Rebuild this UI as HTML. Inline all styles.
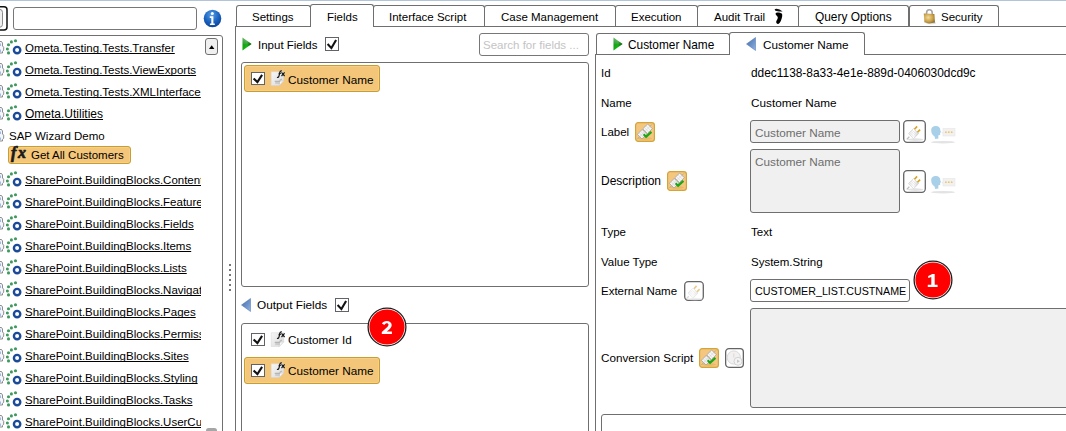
<!DOCTYPE html>
<html><head><meta charset="utf-8">
<style>
html,body{margin:0;padding:0;}
body{width:1066px;height:431px;overflow:hidden;position:relative;background:#fff;font-family:"Liberation Sans",sans-serif;font-size:12px;color:#000;}
.a{position:absolute;box-sizing:border-box;}
.t{position:absolute;white-space:nowrap;line-height:14px;font-size:11.5px;}
.u{text-decoration:underline;text-underline-offset:1px;text-decoration-skip-ink:none;}
.bx{position:absolute;box-sizing:border-box;border:1px solid #6f6f6f;border-radius:3px;}
.tab{position:absolute;box-sizing:border-box;border:1px solid #6f6f6f;border-bottom:none;border-radius:3px 3px 0 0;background:#fff;}
.chk{position:absolute;box-sizing:border-box;width:14px;height:14px;border:1px solid #6a6a6a;background:#fff;}
.orange{position:absolute;box-sizing:border-box;background:#f4c67a;border:1px solid #c89e30;border-radius:3px;box-shadow:inset 0 0 0 1px #f6cf88;}
.btn{position:absolute;box-sizing:border-box;border:1px solid #7a7a7a;border-radius:4px;background:#fff;}
</style></head><body>

<svg width="0" height="0" style="position:absolute">
<defs>
<linearGradient id="docg" x1="0" y1="0" x2="1" y2="1"><stop offset="0" stop-color="#f7f7f7"/><stop offset="1" stop-color="#d9d9d9"/></linearGradient>
<linearGradient id="grt" x1="0" y1="0" x2="1" y2="0"><stop offset="0" stop-color="#0a7a0a"/><stop offset="0.45" stop-color="#1ec81e"/><stop offset="1" stop-color="#0f8f0f"/></linearGradient>
<linearGradient id="blt" x1="0" y1="0" x2="1" y2="0"><stop offset="0" stop-color="#7ea6d8"/><stop offset="0.6" stop-color="#4f7fc0"/><stop offset="1" stop-color="#3a66a8"/></linearGradient>
<linearGradient id="plg" x1="0" y1="0" x2="1" y2="0"><stop offset="0" stop-color="#e8e8e8"/><stop offset="0.5" stop-color="#ffffff"/><stop offset="1" stop-color="#d0d0d0"/></linearGradient>
<radialGradient id="lockg" cx="0.4" cy="0.4" r="0.7"><stop offset="0" stop-color="#f2dc9a"/><stop offset="0.6" stop-color="#c9a048"/><stop offset="1" stop-color="#8a6a28"/></radialGradient>
<linearGradient id="gv" x1="0" y1="0" x2="0" y2="1"><stop offset="0" stop-color="#7cc47c"/><stop offset="0.45" stop-color="#3aae3a"/><stop offset="0.55" stop-color="#17b017"/><stop offset="1" stop-color="#12c012"/></linearGradient>
<linearGradient id="gh" x1="0" y1="0" x2="1" y2="0"><stop offset="0" stop-color="#004000" stop-opacity="0.15"/><stop offset="0.5" stop-color="#004000" stop-opacity="0"/><stop offset="1" stop-color="#003000" stop-opacity="0.75"/></linearGradient>
<linearGradient id="bv" x1="0" y1="0" x2="1" y2="1"><stop offset="0" stop-color="#4a6fa8"/><stop offset="0.6" stop-color="#6e95cc"/><stop offset="1" stop-color="#94b6e8"/></linearGradient>
<linearGradient id="shad" x1="0" y1="0" x2="0" y2="1"><stop offset="0" stop-color="#d8d8d8"/><stop offset="1" stop-color="#ffffff" stop-opacity="0"/></linearGradient>
</defs></svg>
<!-- top line -->
<div class="a" style="left:0;top:0;width:1066px;height:1px;background:#b1c4d8"></div>

<!-- LEFT PANEL -->
<svg class="a" style="left:0;top:0" width="10" height="34" viewBox="0 0 10 34"><rect x="-10" y="6.7" width="17" height="23.4" rx="3" fill="#fff" stroke="#111" stroke-width="1.5"/><rect x="-10" y="9.3" width="12.5" height="18" rx="3" fill="#f0f0f0" stroke="#8c8c8c" stroke-width="1"/></svg>
<div class="bx" style="left:13px;top:7px;width:184px;height:23px;border-color:#777"></div>
<!-- info icon -->
<svg class="a" style="left:203px;top:9px" width="19" height="19" viewBox="0 0 19 19">
<defs><radialGradient id="ig" cx="0.45" cy="0.3" r="0.75"><stop offset="0" stop-color="#5aa0e6"/><stop offset="0.55" stop-color="#1a63c0"/><stop offset="1" stop-color="#0b3f93"/></radialGradient></defs>
<circle cx="9.5" cy="9.5" r="8.8" fill="url(#ig)"/>
<circle cx="9.3" cy="4.6" r="1.5" fill="#fff"/>
<path d="M6.8 7.3h3.6v7.2h1.4v1.6H6.9v-1.6h1.4V8.9H6.8z" fill="#fff"/>
</svg>

<!-- tree panel -->
<div class="a" style="left:-10px;top:35px;width:233px;height:420px;border:1px solid #707070;border-radius:3px;"></div>
<div class="a" style="left:205px;top:38px;width:13px;height:17px;border:1px solid #707070;border-radius:3px;background:#f0f0f0"></div>
<svg class="a" style="left:208px;top:44px" width="8" height="6" viewBox="0 0 8 6"><path d="M1 5H6.4L3.7 1.2Z" fill="#000"/></svg>
<div class="a" style="left:206px;top:428px;width:11px;height:8px;background:#a6a6a6;border-radius:2.5px"></div>

<!--TREE-->
<div class="a" style="left:0;top:36px;width:201px;height:395px;overflow:hidden">
<svg class="a" style="left:0;top:4px" width="6" height="14" viewBox="0 0 6 14"><path d="M-3 1.5h4.5l1 1.5v3l1.2 1.2v3l-1.2 1.2v1.6h-5.5z" fill="#f4f6fa" stroke="#808080" stroke-width="0.9"/><rect x="-2" y="3.5" width="2.8" height="2.5" fill="#86acea"/><rect x="-2" y="9.5" width="2.8" height="2.5" fill="#86acea"/></svg>
<svg class="a" style="left:6px;top:3px" width="18" height="16" viewBox="0 0 18 16"><g fill="#3f9a5f"><circle cx="9.5" cy="1.8" r="1.55"/><circle cx="5.4" cy="2.9" r="1.55"/><circle cx="2.5" cy="5.8" r="1.55"/><circle cx="1.4" cy="10" r="1.55"/><circle cx="2.5" cy="13.9" r="1.55"/></g><ellipse cx="11.1" cy="11.1" rx="3.2" ry="3.2" fill="none" stroke="#1b4a98" stroke-width="2.4"/></svg>
<div class="t u" style="left:25px;top:5px">Ometa.Testing.Tests.Transfer</div>
<svg class="a" style="left:0;top:26px" width="6" height="14" viewBox="0 0 6 14"><path d="M-3 1.5h4.5l1 1.5v3l1.2 1.2v3l-1.2 1.2v1.6h-5.5z" fill="#f4f6fa" stroke="#808080" stroke-width="0.9"/><rect x="-2" y="3.5" width="2.8" height="2.5" fill="#86acea"/><rect x="-2" y="9.5" width="2.8" height="2.5" fill="#86acea"/></svg>
<svg class="a" style="left:6px;top:25px" width="18" height="16" viewBox="0 0 18 16"><g fill="#3f9a5f"><circle cx="9.5" cy="1.8" r="1.55"/><circle cx="5.4" cy="2.9" r="1.55"/><circle cx="2.5" cy="5.8" r="1.55"/><circle cx="1.4" cy="10" r="1.55"/><circle cx="2.5" cy="13.9" r="1.55"/></g><ellipse cx="11.1" cy="11.1" rx="3.2" ry="3.2" fill="none" stroke="#1b4a98" stroke-width="2.4"/></svg>
<div class="t u" style="left:25px;top:27px">Ometa.Testing.Tests.ViewExports</div>
<svg class="a" style="left:0;top:48px" width="6" height="14" viewBox="0 0 6 14"><path d="M-3 1.5h4.5l1 1.5v3l1.2 1.2v3l-1.2 1.2v1.6h-5.5z" fill="#f4f6fa" stroke="#808080" stroke-width="0.9"/><rect x="-2" y="3.5" width="2.8" height="2.5" fill="#86acea"/><rect x="-2" y="9.5" width="2.8" height="2.5" fill="#86acea"/></svg>
<svg class="a" style="left:6px;top:47px" width="18" height="16" viewBox="0 0 18 16"><g fill="#3f9a5f"><circle cx="9.5" cy="1.8" r="1.55"/><circle cx="5.4" cy="2.9" r="1.55"/><circle cx="2.5" cy="5.8" r="1.55"/><circle cx="1.4" cy="10" r="1.55"/><circle cx="2.5" cy="13.9" r="1.55"/></g><ellipse cx="11.1" cy="11.1" rx="3.2" ry="3.2" fill="none" stroke="#1b4a98" stroke-width="2.4"/></svg>
<div class="t u" style="left:25px;top:49px">Ometa.Testing.Tests.XMLInterface</div>
<svg class="a" style="left:0;top:70px" width="6" height="14" viewBox="0 0 6 14"><path d="M-3 1.5h4.5l1 1.5v3l1.2 1.2v3l-1.2 1.2v1.6h-5.5z" fill="#f4f6fa" stroke="#808080" stroke-width="0.9"/><rect x="-2" y="3.5" width="2.8" height="2.5" fill="#86acea"/><rect x="-2" y="9.5" width="2.8" height="2.5" fill="#86acea"/></svg>
<svg class="a" style="left:6px;top:69px" width="18" height="16" viewBox="0 0 18 16"><g fill="#3f9a5f"><circle cx="9.5" cy="1.8" r="1.55"/><circle cx="5.4" cy="2.9" r="1.55"/><circle cx="2.5" cy="5.8" r="1.55"/><circle cx="1.4" cy="10" r="1.55"/><circle cx="2.5" cy="13.9" r="1.55"/></g><ellipse cx="11.1" cy="11.1" rx="3.2" ry="3.2" fill="none" stroke="#1b4a98" stroke-width="2.4"/></svg>
<div class="t u" style="left:25px;top:71px;font-size:12px">Ometa.Utilities</div>
<svg class="a" style="left:0;top:92px" width="6" height="14" viewBox="0 0 6 14"><path d="M-3 1.5h4.5l1 1.5v3l1.2 1.2v3l-1.2 1.2v1.6h-5.5z" fill="#f4f6fa" stroke="#808080" stroke-width="0.9"/><rect x="-2" y="3.5" width="2.8" height="2.5" fill="#86acea"/><rect x="-2" y="9.5" width="2.8" height="2.5" fill="#86acea"/></svg>
<div class="t" style="left:9px;top:93px">SAP Wizard Demo</div>
<div class="orange" style="left:8px;top:110px;width:123px;height:18px"></div>
<div class="a" style="left:11px;top:108px;font-family:'Liberation Serif';font-style:italic;font-weight:bold;font-size:16px;line-height:18px;color:#1a1a1a;letter-spacing:1.6px;-webkit-text-stroke:0.7px #1a1a1a">fx</div>
<div class="t" style="left:31px;top:112px">Get All Customers</div>
<svg class="a" style="left:0;top:136px" width="6" height="14" viewBox="0 0 6 14"><path d="M-3 1.5h4.5l1 1.5v3l1.2 1.2v3l-1.2 1.2v1.6h-5.5z" fill="#f4f6fa" stroke="#808080" stroke-width="0.9"/><rect x="-2" y="3.5" width="2.8" height="2.5" fill="#86acea"/><rect x="-2" y="9.5" width="2.8" height="2.5" fill="#86acea"/></svg>
<svg class="a" style="left:6px;top:135px" width="18" height="16" viewBox="0 0 18 16"><g fill="#3f9a5f"><circle cx="9.5" cy="1.8" r="1.55"/><circle cx="5.4" cy="2.9" r="1.55"/><circle cx="2.5" cy="5.8" r="1.55"/><circle cx="1.4" cy="10" r="1.55"/><circle cx="2.5" cy="13.9" r="1.55"/></g><ellipse cx="11.1" cy="11.1" rx="3.2" ry="3.2" fill="none" stroke="#1b4a98" stroke-width="2.4"/></svg>
<div class="t u" style="left:25px;top:137px">SharePoint.BuildingBlocks.Content</div>
<svg class="a" style="left:0;top:158px" width="6" height="14" viewBox="0 0 6 14"><path d="M-3 1.5h4.5l1 1.5v3l1.2 1.2v3l-1.2 1.2v1.6h-5.5z" fill="#f4f6fa" stroke="#808080" stroke-width="0.9"/><rect x="-2" y="3.5" width="2.8" height="2.5" fill="#86acea"/><rect x="-2" y="9.5" width="2.8" height="2.5" fill="#86acea"/></svg>
<svg class="a" style="left:6px;top:157px" width="18" height="16" viewBox="0 0 18 16"><g fill="#3f9a5f"><circle cx="9.5" cy="1.8" r="1.55"/><circle cx="5.4" cy="2.9" r="1.55"/><circle cx="2.5" cy="5.8" r="1.55"/><circle cx="1.4" cy="10" r="1.55"/><circle cx="2.5" cy="13.9" r="1.55"/></g><ellipse cx="11.1" cy="11.1" rx="3.2" ry="3.2" fill="none" stroke="#1b4a98" stroke-width="2.4"/></svg>
<div class="t u" style="left:25px;top:159px">SharePoint.BuildingBlocks.Features</div>
<svg class="a" style="left:0;top:180px" width="6" height="14" viewBox="0 0 6 14"><path d="M-3 1.5h4.5l1 1.5v3l1.2 1.2v3l-1.2 1.2v1.6h-5.5z" fill="#f4f6fa" stroke="#808080" stroke-width="0.9"/><rect x="-2" y="3.5" width="2.8" height="2.5" fill="#86acea"/><rect x="-2" y="9.5" width="2.8" height="2.5" fill="#86acea"/></svg>
<svg class="a" style="left:6px;top:179px" width="18" height="16" viewBox="0 0 18 16"><g fill="#3f9a5f"><circle cx="9.5" cy="1.8" r="1.55"/><circle cx="5.4" cy="2.9" r="1.55"/><circle cx="2.5" cy="5.8" r="1.55"/><circle cx="1.4" cy="10" r="1.55"/><circle cx="2.5" cy="13.9" r="1.55"/></g><ellipse cx="11.1" cy="11.1" rx="3.2" ry="3.2" fill="none" stroke="#1b4a98" stroke-width="2.4"/></svg>
<div class="t u" style="left:25px;top:181px">SharePoint.BuildingBlocks.Fields</div>
<svg class="a" style="left:0;top:202px" width="6" height="14" viewBox="0 0 6 14"><path d="M-3 1.5h4.5l1 1.5v3l1.2 1.2v3l-1.2 1.2v1.6h-5.5z" fill="#f4f6fa" stroke="#808080" stroke-width="0.9"/><rect x="-2" y="3.5" width="2.8" height="2.5" fill="#86acea"/><rect x="-2" y="9.5" width="2.8" height="2.5" fill="#86acea"/></svg>
<svg class="a" style="left:6px;top:201px" width="18" height="16" viewBox="0 0 18 16"><g fill="#3f9a5f"><circle cx="9.5" cy="1.8" r="1.55"/><circle cx="5.4" cy="2.9" r="1.55"/><circle cx="2.5" cy="5.8" r="1.55"/><circle cx="1.4" cy="10" r="1.55"/><circle cx="2.5" cy="13.9" r="1.55"/></g><ellipse cx="11.1" cy="11.1" rx="3.2" ry="3.2" fill="none" stroke="#1b4a98" stroke-width="2.4"/></svg>
<div class="t u" style="left:25px;top:203px">SharePoint.BuildingBlocks.Items</div>
<svg class="a" style="left:0;top:224px" width="6" height="14" viewBox="0 0 6 14"><path d="M-3 1.5h4.5l1 1.5v3l1.2 1.2v3l-1.2 1.2v1.6h-5.5z" fill="#f4f6fa" stroke="#808080" stroke-width="0.9"/><rect x="-2" y="3.5" width="2.8" height="2.5" fill="#86acea"/><rect x="-2" y="9.5" width="2.8" height="2.5" fill="#86acea"/></svg>
<svg class="a" style="left:6px;top:223px" width="18" height="16" viewBox="0 0 18 16"><g fill="#3f9a5f"><circle cx="9.5" cy="1.8" r="1.55"/><circle cx="5.4" cy="2.9" r="1.55"/><circle cx="2.5" cy="5.8" r="1.55"/><circle cx="1.4" cy="10" r="1.55"/><circle cx="2.5" cy="13.9" r="1.55"/></g><ellipse cx="11.1" cy="11.1" rx="3.2" ry="3.2" fill="none" stroke="#1b4a98" stroke-width="2.4"/></svg>
<div class="t u" style="left:25px;top:225px">SharePoint.BuildingBlocks.Lists</div>
<svg class="a" style="left:0;top:246px" width="6" height="14" viewBox="0 0 6 14"><path d="M-3 1.5h4.5l1 1.5v3l1.2 1.2v3l-1.2 1.2v1.6h-5.5z" fill="#f4f6fa" stroke="#808080" stroke-width="0.9"/><rect x="-2" y="3.5" width="2.8" height="2.5" fill="#86acea"/><rect x="-2" y="9.5" width="2.8" height="2.5" fill="#86acea"/></svg>
<svg class="a" style="left:6px;top:245px" width="18" height="16" viewBox="0 0 18 16"><g fill="#3f9a5f"><circle cx="9.5" cy="1.8" r="1.55"/><circle cx="5.4" cy="2.9" r="1.55"/><circle cx="2.5" cy="5.8" r="1.55"/><circle cx="1.4" cy="10" r="1.55"/><circle cx="2.5" cy="13.9" r="1.55"/></g><ellipse cx="11.1" cy="11.1" rx="3.2" ry="3.2" fill="none" stroke="#1b4a98" stroke-width="2.4"/></svg>
<div class="t u" style="left:25px;top:247px">SharePoint.BuildingBlocks.Navigation</div>
<svg class="a" style="left:0;top:268px" width="6" height="14" viewBox="0 0 6 14"><path d="M-3 1.5h4.5l1 1.5v3l1.2 1.2v3l-1.2 1.2v1.6h-5.5z" fill="#f4f6fa" stroke="#808080" stroke-width="0.9"/><rect x="-2" y="3.5" width="2.8" height="2.5" fill="#86acea"/><rect x="-2" y="9.5" width="2.8" height="2.5" fill="#86acea"/></svg>
<svg class="a" style="left:6px;top:267px" width="18" height="16" viewBox="0 0 18 16"><g fill="#3f9a5f"><circle cx="9.5" cy="1.8" r="1.55"/><circle cx="5.4" cy="2.9" r="1.55"/><circle cx="2.5" cy="5.8" r="1.55"/><circle cx="1.4" cy="10" r="1.55"/><circle cx="2.5" cy="13.9" r="1.55"/></g><ellipse cx="11.1" cy="11.1" rx="3.2" ry="3.2" fill="none" stroke="#1b4a98" stroke-width="2.4"/></svg>
<div class="t u" style="left:25px;top:269px">SharePoint.BuildingBlocks.Pages</div>
<svg class="a" style="left:0;top:290px" width="6" height="14" viewBox="0 0 6 14"><path d="M-3 1.5h4.5l1 1.5v3l1.2 1.2v3l-1.2 1.2v1.6h-5.5z" fill="#f4f6fa" stroke="#808080" stroke-width="0.9"/><rect x="-2" y="3.5" width="2.8" height="2.5" fill="#86acea"/><rect x="-2" y="9.5" width="2.8" height="2.5" fill="#86acea"/></svg>
<svg class="a" style="left:6px;top:289px" width="18" height="16" viewBox="0 0 18 16"><g fill="#3f9a5f"><circle cx="9.5" cy="1.8" r="1.55"/><circle cx="5.4" cy="2.9" r="1.55"/><circle cx="2.5" cy="5.8" r="1.55"/><circle cx="1.4" cy="10" r="1.55"/><circle cx="2.5" cy="13.9" r="1.55"/></g><ellipse cx="11.1" cy="11.1" rx="3.2" ry="3.2" fill="none" stroke="#1b4a98" stroke-width="2.4"/></svg>
<div class="t u" style="left:25px;top:291px">SharePoint.BuildingBlocks.Permissions</div>
<svg class="a" style="left:0;top:312px" width="6" height="14" viewBox="0 0 6 14"><path d="M-3 1.5h4.5l1 1.5v3l1.2 1.2v3l-1.2 1.2v1.6h-5.5z" fill="#f4f6fa" stroke="#808080" stroke-width="0.9"/><rect x="-2" y="3.5" width="2.8" height="2.5" fill="#86acea"/><rect x="-2" y="9.5" width="2.8" height="2.5" fill="#86acea"/></svg>
<svg class="a" style="left:6px;top:311px" width="18" height="16" viewBox="0 0 18 16"><g fill="#3f9a5f"><circle cx="9.5" cy="1.8" r="1.55"/><circle cx="5.4" cy="2.9" r="1.55"/><circle cx="2.5" cy="5.8" r="1.55"/><circle cx="1.4" cy="10" r="1.55"/><circle cx="2.5" cy="13.9" r="1.55"/></g><ellipse cx="11.1" cy="11.1" rx="3.2" ry="3.2" fill="none" stroke="#1b4a98" stroke-width="2.4"/></svg>
<div class="t u" style="left:25px;top:313px">SharePoint.BuildingBlocks.Sites</div>
<svg class="a" style="left:0;top:334px" width="6" height="14" viewBox="0 0 6 14"><path d="M-3 1.5h4.5l1 1.5v3l1.2 1.2v3l-1.2 1.2v1.6h-5.5z" fill="#f4f6fa" stroke="#808080" stroke-width="0.9"/><rect x="-2" y="3.5" width="2.8" height="2.5" fill="#86acea"/><rect x="-2" y="9.5" width="2.8" height="2.5" fill="#86acea"/></svg>
<svg class="a" style="left:6px;top:333px" width="18" height="16" viewBox="0 0 18 16"><g fill="#3f9a5f"><circle cx="9.5" cy="1.8" r="1.55"/><circle cx="5.4" cy="2.9" r="1.55"/><circle cx="2.5" cy="5.8" r="1.55"/><circle cx="1.4" cy="10" r="1.55"/><circle cx="2.5" cy="13.9" r="1.55"/></g><ellipse cx="11.1" cy="11.1" rx="3.2" ry="3.2" fill="none" stroke="#1b4a98" stroke-width="2.4"/></svg>
<div class="t u" style="left:25px;top:335px">SharePoint.BuildingBlocks.Styling</div>
<svg class="a" style="left:0;top:356px" width="6" height="14" viewBox="0 0 6 14"><path d="M-3 1.5h4.5l1 1.5v3l1.2 1.2v3l-1.2 1.2v1.6h-5.5z" fill="#f4f6fa" stroke="#808080" stroke-width="0.9"/><rect x="-2" y="3.5" width="2.8" height="2.5" fill="#86acea"/><rect x="-2" y="9.5" width="2.8" height="2.5" fill="#86acea"/></svg>
<svg class="a" style="left:6px;top:355px" width="18" height="16" viewBox="0 0 18 16"><g fill="#3f9a5f"><circle cx="9.5" cy="1.8" r="1.55"/><circle cx="5.4" cy="2.9" r="1.55"/><circle cx="2.5" cy="5.8" r="1.55"/><circle cx="1.4" cy="10" r="1.55"/><circle cx="2.5" cy="13.9" r="1.55"/></g><ellipse cx="11.1" cy="11.1" rx="3.2" ry="3.2" fill="none" stroke="#1b4a98" stroke-width="2.4"/></svg>
<div class="t u" style="left:25px;top:357px">SharePoint.BuildingBlocks.Tasks</div>
<svg class="a" style="left:0;top:378px" width="6" height="14" viewBox="0 0 6 14"><path d="M-3 1.5h4.5l1 1.5v3l1.2 1.2v3l-1.2 1.2v1.6h-5.5z" fill="#f4f6fa" stroke="#808080" stroke-width="0.9"/><rect x="-2" y="3.5" width="2.8" height="2.5" fill="#86acea"/><rect x="-2" y="9.5" width="2.8" height="2.5" fill="#86acea"/></svg>
<svg class="a" style="left:6px;top:377px" width="18" height="16" viewBox="0 0 18 16"><g fill="#3f9a5f"><circle cx="9.5" cy="1.8" r="1.55"/><circle cx="5.4" cy="2.9" r="1.55"/><circle cx="2.5" cy="5.8" r="1.55"/><circle cx="1.4" cy="10" r="1.55"/><circle cx="2.5" cy="13.9" r="1.55"/></g><ellipse cx="11.1" cy="11.1" rx="3.2" ry="3.2" fill="none" stroke="#1b4a98" stroke-width="2.4"/></svg>
<div class="t u" style="left:25px;top:379px">SharePoint.BuildingBlocks.UserCustomActions</div>
</div>
<!--/TREE-->

<!-- splitter dots -->
<div class="a" style="left:229px;top:264px;width:2px;height:27px;background:repeating-linear-gradient(to bottom,#777 0,#777 2px,transparent 2px,transparent 5px)"></div>

<!-- TAB STRIP -->
<div class="a" style="left:236px;top:26px;width:830px;height:1px;background:#6f6f6f"></div>
<div class="a" style="left:235px;top:26px;width:1px;height:405px;background:#6f6f6f"></div>
<div class="tab" style="left:236px;top:5px;width:75px;height:21px"></div>
<div class="tab" style="left:373px;top:5px;width:112px;height:21px"></div>
<div class="tab" style="left:484px;top:5px;width:132px;height:21px"></div>
<div class="tab" style="left:615px;top:5px;width:83px;height:21px"></div>
<div class="tab" style="left:697px;top:5px;width:102px;height:21px"></div>
<div class="tab" style="left:798px;top:5px;width:111px;height:21px"></div>
<div class="tab" style="left:909px;top:5px;width:90px;height:21px"></div>
<div class="tab" style="left:310px;top:4px;width:64px;height:23px"></div>

<div class="t" style="left:252px;top:10px">Settings</div>
<div class="t" style="left:327px;top:10px">Fields</div>
<div class="t" style="left:389px;top:10px">Interface Script</div>
<div class="t" style="left:501px;top:10px">Case Management</div>
<div class="t" style="left:631px;top:10px">Execution</div>
<div class="t" style="left:714px;top:10px">Audit Trail</div>
<svg class="a" style="left:774px;top:8px" width="10" height="17" viewBox="0 0 10 17"><path d="M0.6 1.4C1.2 0.2 3.6 0.6 5.6 1.5L8.6 3.4C6.2 3.9 3.2 3.4 1.4 2.8Z" fill="#111"/><path d="M1.6 5.5C2 4 6 4.2 7.8 5.6C8.8 6.8 8 10 7 12.5C6 15 5 16 3.8 15.9C2.3 15.7 1.8 14.2 2.5 12.8C3.3 11.3 4.2 10 3.6 8.8C3 7.8 1.4 7 1.6 5.5Z" fill="#000"/></svg>
<div class="t" style="left:815px;top:10px;font-size:11.9px">Query Options</div>
<svg class="a" style="left:922px;top:8px" width="16" height="17" viewBox="0 0 16 17"><path d="M4.6 7.5V4.8C4.6 0.8 10.2 0.8 10.2 4.8V7.5" fill="none" stroke="#a4a4a4" stroke-width="1.6"/><ellipse cx="9" cy="15" rx="5" ry="1.2" fill="#dcdcdc"/><path d="M1.8 5.6L12.4 6.1L13 14.6L7 15.4L2.4 14.2Z" fill="url(#lockg)"/></svg>
<div class="t" style="left:941px;top:10px">Security</div>

<!-- INPUT FIELDS -->
<svg class="a" style="left:242px;top:37px" width="10" height="14" viewBox="0 0 10 14"><path d="M0.5 0.5L9.5 7L0.5 13.5z" fill="url(#gv)"/><path d="M0.5 0.5L9.5 7L0.5 13.5z" fill="url(#gh)"/></svg>
<div class="t" style="left:258px;top:38px">Input Fields</div>
<svg class="a" style="left:325px;top:37px" width="14" height="14" viewBox="0 0 14 14"><rect x="0.5" y="0.5" width="13" height="13" fill="#fff" stroke="#606468"/><path d="M2.6 7.0L6.4 11.1L11.1 2.9" fill="none" stroke="#121212" stroke-width="2.1"/></svg>
<div class="bx" style="left:479px;top:33px;width:110px;height:23px;border-color:#777"></div>
<div class="t" style="left:483px;top:38px;color:#c4c4c4">Search for fields ...</div>

<div class="bx" style="left:241px;top:62px;width:348px;height:225px"></div>
<div class="orange" style="left:244px;top:65px;width:136px;height:27px"></div>
<svg class="a" style="left:251px;top:72px" width="14" height="13" viewBox="0 0 14 13"><rect x="0.5" y="0.5" width="13" height="12" fill="#fff" stroke="#606468"/><path d="M2.6 6.5L6.4 10.1L11.1 2.9" fill="none" stroke="#121212" stroke-width="2.1"/></svg>
<svg class="a" style="left:270px;top:70px" width="16" height="16" viewBox="0 0 16 16"><path d="M1.2 1.8H13.7V10.8L9.1 15.6H1.2Z" fill="url(#docg)" stroke="#d6d6d6" stroke-width="0.5"/><path d="M9.1 15.6L13.7 10.8L9.8 11.4Z" fill="#fbfbfb" stroke="#c9c9c9" stroke-width="0.5"/><path d="M7 7.3Q8.5 7.9 9 5.9L9.8 2.3Q10.2 0.6 11.8 0.9" fill="none" stroke="#141414" stroke-width="1.25"/><path d="M8.6 3.4H11" stroke="#141414" stroke-width="0.9"/><path d="M11.5 2.4L14.6 6M14.6 2.4L11.5 6" stroke="#1a1a1a" stroke-width="1.15"/><path d="M4.8 11.4h5.2M5.2 13h4.6M9.6 10.4l2.2-1.3" stroke="#b4b4b4" stroke-width="1.2"/></svg>
<div class="t" style="left:288px;top:73px;font-size:11.75px">Customer Name</div>

<!-- splitter between lists: output -->
<svg class="a" style="left:241px;top:297.5px" width="10" height="14" viewBox="0 0 10 14"><path d="M9.5 0.5L0.5 7L9.5 13.5z" fill="url(#bv)" stroke="#4a70a8" stroke-width="0.5"/></svg>
<div class="t" style="left:257px;top:298px;font-size:11.8px">Output Fields</div>
<svg class="a" style="left:335px;top:298px" width="14" height="14" viewBox="0 0 14 14"><rect x="0.5" y="0.5" width="13" height="13" fill="#fff" stroke="#606468"/><path d="M2.6 7.0L6.4 11.1L11.1 2.9" fill="none" stroke="#121212" stroke-width="2.1"/></svg>

<div class="bx" style="left:241px;top:323px;width:348px;height:140px"></div>
<svg class="a" style="left:251px;top:333px" width="14" height="13" viewBox="0 0 14 13"><rect x="0.5" y="0.5" width="13" height="12" fill="#fff" stroke="#606468"/><path d="M2.6 6.5L6.4 10.1L11.1 2.9" fill="none" stroke="#121212" stroke-width="2.1"/></svg>
<svg class="a" style="left:270px;top:331px" width="16" height="16" viewBox="0 0 16 16"><path d="M1.2 1.8H13.7V10.8L9.1 15.6H1.2Z" fill="url(#docg)" stroke="#d6d6d6" stroke-width="0.5"/><path d="M9.1 15.6L13.7 10.8L9.8 11.4Z" fill="#fbfbfb" stroke="#c9c9c9" stroke-width="0.5"/><path d="M7 7.3Q8.5 7.9 9 5.9L9.8 2.3Q10.2 0.6 11.8 0.9" fill="none" stroke="#141414" stroke-width="1.25"/><path d="M8.6 3.4H11" stroke="#141414" stroke-width="0.9"/><path d="M11.5 2.4L14.6 6M14.6 2.4L11.5 6" stroke="#1a1a1a" stroke-width="1.15"/><path d="M4.8 11.4h5.2M5.2 13h4.6M9.6 10.4l2.2-1.3" stroke="#b4b4b4" stroke-width="1.2"/></svg>
<div class="t" style="left:288px;top:333px;font-size:11.7px">Customer Id</div>
<div class="orange" style="left:244px;top:357px;width:136px;height:27px"></div>
<svg class="a" style="left:251px;top:364px" width="14" height="13" viewBox="0 0 14 13"><rect x="0.5" y="0.5" width="13" height="12" fill="#fff" stroke="#606468"/><path d="M2.6 6.5L6.4 10.1L11.1 2.9" fill="none" stroke="#121212" stroke-width="2.1"/></svg>
<svg class="a" style="left:270px;top:362px" width="16" height="16" viewBox="0 0 16 16"><path d="M1.2 1.8H13.7V10.8L9.1 15.6H1.2Z" fill="url(#docg)" stroke="#d6d6d6" stroke-width="0.5"/><path d="M9.1 15.6L13.7 10.8L9.8 11.4Z" fill="#fbfbfb" stroke="#c9c9c9" stroke-width="0.5"/><path d="M7 7.3Q8.5 7.9 9 5.9L9.8 2.3Q10.2 0.6 11.8 0.9" fill="none" stroke="#141414" stroke-width="1.25"/><path d="M8.6 3.4H11" stroke="#141414" stroke-width="0.9"/><path d="M11.5 2.4L14.6 6M14.6 2.4L11.5 6" stroke="#1a1a1a" stroke-width="1.15"/><path d="M4.8 11.4h5.2M5.2 13h4.6M9.6 10.4l2.2-1.3" stroke="#b4b4b4" stroke-width="1.2"/></svg>
<div class="t" style="left:288px;top:364px;font-size:11.75px">Customer Name</div>

<!-- RIGHT PANEL: inner tabs -->
<div class="a" style="left:596px;top:54px;width:470px;height:1px;background:#6f6f6f"></div>
<div class="a" style="left:595px;top:54px;width:1px;height:377px;background:#6f6f6f"></div>
<div class="tab" style="left:596px;top:33px;width:134px;height:21px"></div>
<div class="tab" style="left:729px;top:32px;width:136px;height:23px"></div>
<svg class="a" style="left:613px;top:37px" width="10" height="14" viewBox="0 0 10 14"><path d="M0.5 0.5L9.5 7L0.5 13.5z" fill="url(#gv)"/><path d="M0.5 0.5L9.5 7L0.5 13.5z" fill="url(#gh)"/></svg>
<div class="t" style="left:628px;top:38px;font-size:11.85px">Customer Name</div>
<svg class="a" style="left:746px;top:37px" width="10" height="14" viewBox="0 0 10 14"><path d="M9.5 0.5L0.5 7L9.5 13.5z" fill="url(#bv)" stroke="#4a70a8" stroke-width="0.5"/></svg>
<div class="t" style="left:763px;top:38px;font-size:11.75px">Customer Name</div>

<!-- rows -->
<div class="t" style="left:601px;top:66px">Id</div>
<div class="t" style="left:751px;top:66px;font-size:11.9px">ddec1138-8a33-4e1e-889d-0406030dcd9c</div>
<div class="t" style="left:601px;top:96px">Name</div>
<div class="t" style="left:751px;top:96px;font-size:11.75px">Customer Name</div>
<div class="t" style="left:601px;top:125px">Label</div>
<svg class="a" style="left:635px;top:122px" width="20" height="20" viewBox="0 0 20 20"><rect x="0.6" y="0.6" width="18.8" height="18.8" rx="2.6" fill="#f5c77e" stroke="#d3a43a" stroke-width="1.2"/><ellipse cx="10" cy="16.5" rx="7" ry="1.5" fill="#e9b96a"/><g transform="rotate(45 9.8 9.5)"><rect x="6.5" y="2.2" width="6.6" height="6.9" fill="#f6f6f6" stroke="#9c9c9c" stroke-width="0.7"/><rect x="6.5" y="9.9" width="6.6" height="6.9" fill="#f2f2f2" stroke="#9c9c9c" stroke-width="0.7"/><path d="M6.5 4.6h6.6M6.5 7h6.6M6.5 12.2h6.6M6.5 14.5h6.6M9.8 2.2v14.6" stroke="#cfcfcf" stroke-width="0.5"/><path d="M9.8 -0.5v2.7M9.8 16.8v3.2" stroke="#a8a8a8" stroke-width="0.8"/></g><path d="M8.6 12.3L11.1 14.8L16.4 9.9" fill="none" stroke="#1aa81a" stroke-width="2.2"/></svg>
<div class="bx" style="left:750px;top:120px;width:150px;height:23px;background:#f0f0f0"></div>
<div class="t" style="left:755px;top:126px;color:#6d6d6d;font-size:11.75px">Customer Name</div>
<svg class="a" style="left:903px;top:120px" width="23" height="23" viewBox="0 0 23 23"><rect x="0.7" y="0.7" width="21.6" height="21.6" rx="3.5" fill="#fff" stroke="#646464" stroke-width="1.3"/><g opacity="1" transform="translate(0.0 0.0)"><ellipse cx="12.5" cy="19.6" rx="8" ry="1.3" fill="#e2e2e2"/><path d="M11.3 9.5L14.1 6.4M13.9 12.8L17.1 9.7" stroke="#dba528" stroke-width="1.7"/><path d="M10.6 8.6L15.6 13.6L10.5 18.6L5.5 13.6Z" fill="url(#plg)" stroke="#c8c8c8" stroke-width="0.6"/><path d="M8 11.2l5 5M9.2 10.2l5 5M6.8 12.4l5 5" stroke="#d6d6d6" stroke-width="0.5"/><path d="M6.3 16.8L3.8 19.4" stroke="#bdbdbd" stroke-width="1.3"/></g></svg><svg class="a" style="left:930px;top:125px" width="26" height="20" viewBox="0 0 26 20"><ellipse cx="13" cy="17.2" rx="12" ry="1.3" fill="#e3e3e3"/><path d="M1.2 5.3C1.2 2.3 3.5 1 6 1C8.7 1 10.4 2.8 10.3 5.3L11.1 7.3L10.1 7.8L10.2 9.8L8.3 10.4L8.4 13.6L5.2 14L4.6 11.4C2.3 10.3 1.2 8.2 1.2 5.3Z" fill="#a8d0e8"/><path d="M11.2 7.6L13.3 6.5V9Z" fill="#ececec"/><rect x="13" y="3.4" width="12" height="7.6" fill="#f1f1f1" stroke="#e6e6e6" stroke-width="0.6"/><circle cx="15.9" cy="7.2" r="0.9" fill="#f0c46a"/><circle cx="18.8" cy="7.2" r="0.9" fill="#f0c46a"/><circle cx="21.7" cy="7.2" r="0.9" fill="#f0c46a"/></svg>

<div class="t" style="left:601px;top:174px;font-size:12px">Description</div>
<svg class="a" style="left:667px;top:171px" width="20" height="20" viewBox="0 0 20 20"><rect x="0.6" y="0.6" width="18.8" height="18.8" rx="2.6" fill="#f5c77e" stroke="#d3a43a" stroke-width="1.2"/><ellipse cx="10" cy="16.5" rx="7" ry="1.5" fill="#e9b96a"/><g transform="rotate(45 9.8 9.5)"><rect x="6.5" y="2.2" width="6.6" height="6.9" fill="#f6f6f6" stroke="#9c9c9c" stroke-width="0.7"/><rect x="6.5" y="9.9" width="6.6" height="6.9" fill="#f2f2f2" stroke="#9c9c9c" stroke-width="0.7"/><path d="M6.5 4.6h6.6M6.5 7h6.6M6.5 12.2h6.6M6.5 14.5h6.6M9.8 2.2v14.6" stroke="#cfcfcf" stroke-width="0.5"/><path d="M9.8 -0.5v2.7M9.8 16.8v3.2" stroke="#a8a8a8" stroke-width="0.8"/></g><path d="M8.6 12.3L11.1 14.8L16.4 9.9" fill="none" stroke="#1aa81a" stroke-width="2.2"/></svg>
<div class="bx" style="left:750px;top:149px;width:150px;height:64px;background:#f0f0f0"></div>
<div class="t" style="left:755px;top:155px;color:#6d6d6d;font-size:11.75px">Customer Name</div>
<svg class="a" style="left:903px;top:170px" width="23" height="23" viewBox="0 0 23 23"><rect x="0.7" y="0.7" width="21.6" height="21.6" rx="3.5" fill="#fff" stroke="#646464" stroke-width="1.3"/><g opacity="1" transform="translate(0.0 0.0)"><ellipse cx="12.5" cy="19.6" rx="8" ry="1.3" fill="#e2e2e2"/><path d="M11.3 9.5L14.1 6.4M13.9 12.8L17.1 9.7" stroke="#dba528" stroke-width="1.7"/><path d="M10.6 8.6L15.6 13.6L10.5 18.6L5.5 13.6Z" fill="url(#plg)" stroke="#c8c8c8" stroke-width="0.6"/><path d="M8 11.2l5 5M9.2 10.2l5 5M6.8 12.4l5 5" stroke="#d6d6d6" stroke-width="0.5"/><path d="M6.3 16.8L3.8 19.4" stroke="#bdbdbd" stroke-width="1.3"/></g></svg><svg class="a" style="left:930px;top:175px" width="26" height="20" viewBox="0 0 26 20"><ellipse cx="13" cy="17.2" rx="12" ry="1.3" fill="#e3e3e3"/><path d="M1.2 5.3C1.2 2.3 3.5 1 6 1C8.7 1 10.4 2.8 10.3 5.3L11.1 7.3L10.1 7.8L10.2 9.8L8.3 10.4L8.4 13.6L5.2 14L4.6 11.4C2.3 10.3 1.2 8.2 1.2 5.3Z" fill="#a8d0e8"/><path d="M11.2 7.6L13.3 6.5V9Z" fill="#ececec"/><rect x="13" y="3.4" width="12" height="7.6" fill="#f1f1f1" stroke="#e6e6e6" stroke-width="0.6"/><circle cx="15.9" cy="7.2" r="0.9" fill="#f0c46a"/><circle cx="18.8" cy="7.2" r="0.9" fill="#f0c46a"/><circle cx="21.7" cy="7.2" r="0.9" fill="#f0c46a"/></svg>

<div class="t" style="left:601px;top:225px">Type</div>
<div class="t" style="left:751px;top:225px">Text</div>
<div class="t" style="left:601px;top:255px">Value Type</div>
<div class="t" style="left:751px;top:255px">System.String</div>
<div class="t" style="left:601px;top:284px">External Name</div>
<svg class="a" style="left:684px;top:281px" width="20" height="20" viewBox="0 0 20 20"><rect x="0.7" y="0.7" width="18.6" height="18.6" rx="3.5" fill="#fff" stroke="#646464" stroke-width="1.3"/><g opacity="0.55" transform="translate(-1.5 -1.5)"><ellipse cx="12.5" cy="19.6" rx="8" ry="1.3" fill="#e2e2e2"/><path d="M11.3 9.5L14.1 6.4M13.9 12.8L17.1 9.7" stroke="#dba528" stroke-width="1.7"/><path d="M10.6 8.6L15.6 13.6L10.5 18.6L5.5 13.6Z" fill="url(#plg)" stroke="#c8c8c8" stroke-width="0.6"/><path d="M8 11.2l5 5M9.2 10.2l5 5M6.8 12.4l5 5" stroke="#d6d6d6" stroke-width="0.5"/><path d="M6.3 16.8L3.8 19.4" stroke="#bdbdbd" stroke-width="1.3"/></g></svg>
<div class="bx" style="left:750px;top:279px;width:160px;height:23px;background:#fff"></div>
<div class="t" style="left:755px;top:284px;font-size:10.7px">CUSTOMER_LIST.CUSTNAME</div>

<div class="t" style="left:601px;top:351px;font-size:11.7px">Conversion Script</div>
<svg class="a" style="left:699px;top:348px" width="20" height="20" viewBox="0 0 20 20"><rect x="0.6" y="0.6" width="18.8" height="18.8" rx="2.6" fill="#f5c77e" stroke="#d3a43a" stroke-width="1.2"/><ellipse cx="10" cy="16.5" rx="7" ry="1.5" fill="#e9b96a"/><g transform="rotate(45 9.8 9.5)"><rect x="6.5" y="2.2" width="6.6" height="6.9" fill="#f6f6f6" stroke="#9c9c9c" stroke-width="0.7"/><rect x="6.5" y="9.9" width="6.6" height="6.9" fill="#f2f2f2" stroke="#9c9c9c" stroke-width="0.7"/><path d="M6.5 4.6h6.6M6.5 7h6.6M6.5 12.2h6.6M6.5 14.5h6.6M9.8 2.2v14.6" stroke="#cfcfcf" stroke-width="0.5"/><path d="M9.8 -0.5v2.7M9.8 16.8v3.2" stroke="#a8a8a8" stroke-width="0.8"/></g><path d="M8.6 12.3L11.1 14.8L16.4 9.9" fill="none" stroke="#1aa81a" stroke-width="2.2"/></svg>
<svg class="a" style="left:725px;top:348px" width="19" height="20" viewBox="0 0 19 20"><rect x="0.65" y="0.65" width="17.7" height="18.7" rx="3.3" fill="#fff" stroke="#646464" stroke-width="1.3"/><circle cx="8.8" cy="9.5" r="6.6" fill="#f1f1f1" stroke="#d9d9d9" stroke-width="1"/><path d="M8.8 5.5V9.5" stroke="#e6b8b8" stroke-width="0.6"/><circle cx="13" cy="13.3" r="4" fill="#f4f4f4" stroke="#cfcfcf" stroke-width="0.9"/><path d="M12 11.5L15 13.3L12 15.1Z" fill="#c8c8c8"/></svg>
<div class="bx" style="left:750px;top:308px;width:330px;height:100px;background:#f0f0f0"></div>
<div class="bx" style="left:601px;top:414px;width:480px;height:40px;background:#fff"></div>

<!-- badges -->
<svg class="a" style="left:913px;top:260px" width="40" height="40" viewBox="0 0 40 40"><circle cx="20" cy="20" r="18.9" fill="#fff" stroke="#1e1e1e" stroke-width="1.3"/><circle cx="20" cy="20" r="17.6" fill="#f00"/><path d="M15.2 15.9L19.4 14H21.7V24.7H24.6V27H14.8V24.7H18.3V16.9L15.2 18Z" fill="#fff"/></svg>
<svg class="a" style="left:367px;top:307px" width="40" height="40" viewBox="0 0 40 40"><circle cx="20" cy="20" r="18.9" fill="#fff" stroke="#1e1e1e" stroke-width="1.3"/><circle cx="20" cy="20" r="17.6" fill="#f00"/><path d="M14.9 16.6C15.8 14.8 17.5 13.9 19.8 13.9C22.7 13.9 24.7 15.6 24.7 17.9C24.7 20.2 23.2 21.6 20.4 24L19.7 24.6H24.9V27H14.8V24.9L18.4 21.7C20.6 19.8 21.5 18.9 21.5 17.8C21.5 16.8 20.8 16.3 19.8 16.3C18.8 16.3 18 16.9 17.4 18Z" fill="#fff"/></svg>

</body></html>
